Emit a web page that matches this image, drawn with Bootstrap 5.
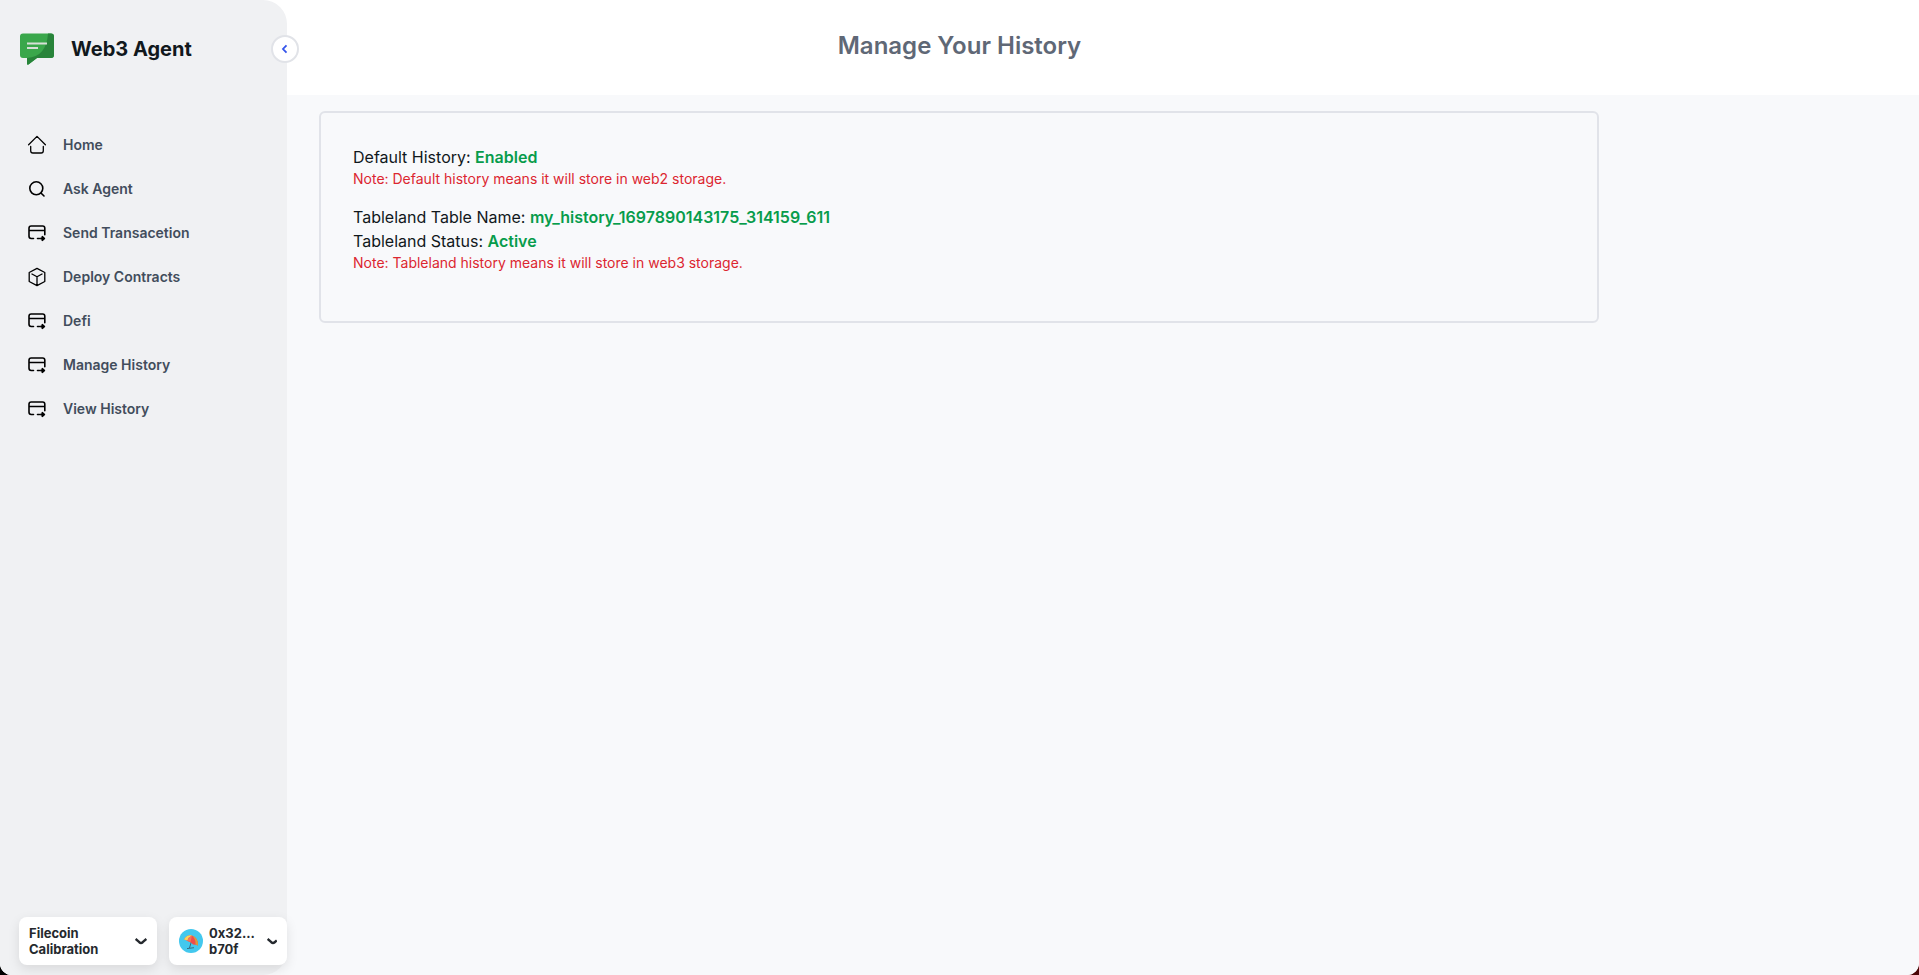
<!DOCTYPE html>
<html lang="en">
<head>
<meta charset="utf-8">
<meta name="viewport" content="width=device-width, initial-scale=1">
<title>Web3 Agent - Manage Your History</title>
<link rel="stylesheet" href="https://cdn.jsdelivr.net/npm/bootstrap@5.3.0/dist/css/bootstrap.min.css">
<style>
:root { --side-width: 287px; }
html { background: linear-gradient(90deg, #000 50%, #4a0606); }
body { font-family: Inter, "Liberation Sans", sans-serif; color: #11181c; background: transparent; }
.app-shell { background: #fff; border-radius: 0 0 12px 12px; overflow: hidden; }
.side-panel { width: var(--side-width); background: #f0f1f3; border-radius: 0 24px 24px 0; padding: 28px 0 10px; }
.content-area { background: #f8f9fb; }
.side-wrap { background: linear-gradient(#fff 95px, #f8f9fb 95px); }
.brand-row { height: 42px; padding-left: 19px; gap: 16px; }
.brand-name { font-size: 20px; line-height: 28px; font-weight: 700; color: #11181c; }
.toggle-btn { position: absolute; top: 35px; right: -12px; width: 28px; height: 28px; border: 2px solid #e1e3e8; z-index: 2; }
.side-nav { margin-top: 53px; padding: 0 16px; }
.side-link { height: 44px; padding: 0 11px; gap: 16px; font-size: 14px; line-height: 20px; font-weight: 600; color: #424d5c; }
.side-link svg { color: #000; }
.wallet-row { padding-left: 19px; gap: 12px; }
.wallet-btn { height: 48px; padding: 0 10px; border-radius: 8px; font-size: 13px; line-height: 16px; font-weight: 700; color: #25292e; box-shadow: 0 4px 12px rgba(0,0,0,.1); }
.network-btn { flex: 0 0 138px; }
.account-btn { flex: 1 1 0; }
.account-id { gap: 6px; }
.avatar { width: 24px; height: 24px; }
.page-head { padding: 30px var(--side-width) 33px 0; }
.page-title { font-size: 24px; line-height: 32px; font-weight: 600; color: #5f6876; }
.history-card { max-width: 1280px; border: 2px solid #e1e3e9; border-radius: 6px; padding: 32px; font-size: 16px; line-height: 24px; }
.state-text { color: #079c4b; font-weight: 600; }
.note-text { color: #dc2630; font-size: 14px; line-height: 20px; }
</style>
</head>
<body>
<svg class="d-none" aria-hidden="true">
  <symbol id="card-icon" viewBox="0 0 20 20" fill="none" stroke="currentColor" stroke-width="1.6" stroke-linecap="round" stroke-linejoin="round">
    <path d="M6.500 15.500H4.200Q2 15.500 2 13.300V5.200Q2 3 4.200 3H15.600Q17.800 3 17.800 5.200V11.800M2 7.500H17.800M10.500 15.500H12.500"/>
    <path d="M14 15.500H17.200M15.400 13.900L17 15.500L15.400 17.100" stroke-width="2"/>
  </symbol>
</svg>
<div class="app-shell d-flex min-vh-100">
  <div class="side-wrap d-flex flex-shrink-0">
    <aside class="side-panel position-relative d-flex flex-column">
      <div class="brand-row d-flex align-items-center">
        <svg width="36" height="36" viewBox="0 0 36 36" aria-hidden="true">
          <path d="M4 2.500H32Q35 2.500 35 5.500V24Q35 27 32 27H18L9.500 33.500H8V27H4Q1 27 1 24V5.500Q1 2.500 4 2.500Z" fill="#3aa74b"/>
          <path d="M29 2.500H32Q35 2.500 35 5.500V24Q35 27 32 27H18L9.500 33.500H8V27C21 26 28 18 29 2.500Z" fill="#28843a"/>
          <path d="M8 12.500H28M8 17H19" stroke="#d7dfd8" stroke-width="2"/>
        </svg>
        <span class="brand-name">Web3 Agent</span>
      </div>
      <button type="button" class="toggle-btn bg-white rounded-circle p-0 d-flex align-items-center justify-content-center" aria-label="Collapse sidebar">
        <svg width="12" height="12" viewBox="0 0 12 12" fill="none" stroke="#3454eb" stroke-width="1.800"><path d="M7.500 2.300L4 6L7.500 9.700"/></svg>
      </button>
      <nav class="side-nav nav flex-column flex-nowrap">
        <a href="#" class="side-link d-flex align-items-center text-decoration-none">
          <svg width="20" height="20" viewBox="0 0 20 20" fill="none" stroke="currentColor" stroke-width="1.300" stroke-linecap="round" stroke-linejoin="round"><path d="M1.600 9.800L10 1.400L18.400 9.800M3.700 11.500V15.800Q3.700 18 5.900 18H14.100Q16.300 18 16.300 15.800V11.500"/></svg>
          Home</a>
        <a href="#" class="side-link d-flex align-items-center text-decoration-none">
          <svg width="20" height="20" viewBox="0 0 20 20" fill="none" stroke="currentColor" stroke-width="1.600" stroke-linecap="round"><circle cx="9.300" cy="9.300" r="6.500"/><path d="M14.200 14.200L17 17"/></svg>
          Ask Agent</a>
        <a href="#" class="side-link d-flex align-items-center text-decoration-none"><svg width="20" height="20"><use href="#card-icon"/></svg>Send Transacetion</a>
        <a href="#" class="side-link d-flex align-items-center text-decoration-none">
          <svg width="20" height="20" viewBox="0 0 20 20" fill="none" stroke="currentColor" stroke-width="1.300" stroke-linejoin="round"><path d="M10 1.400L17.800 5.500V14.500L10 18.600L2.200 14.500V5.500ZM4.500 6.800L10 9.800L15.500 6.800M10 9.800V18.600"/></svg>
          Deploy Contracts</a>
        <a href="#" class="side-link d-flex align-items-center text-decoration-none"><svg width="20" height="20"><use href="#card-icon"/></svg>Defi</a>
        <a href="#" class="side-link d-flex align-items-center text-decoration-none"><svg width="20" height="20"><use href="#card-icon"/></svg>Manage History</a>
        <a href="#" class="side-link d-flex align-items-center text-decoration-none"><svg width="20" height="20"><use href="#card-icon"/></svg>View History</a>
      </nav>
      <div class="wallet-row d-flex mt-auto">
        <button type="button" class="wallet-btn network-btn bg-white border-0 d-flex align-items-center justify-content-between text-start">
          <span>Filecoin<br>Calibration</span>
          <svg width="12" height="8" viewBox="0 0 12 8" fill="none" stroke="#25292e" stroke-width="2.400"><path d="M.6 2L4.300 5.200Q6 6.600 7.700 5.200L11.400 2"/></svg>
        </button>
        <button type="button" class="wallet-btn account-btn bg-white border-0 d-flex align-items-center justify-content-between text-start">
          <span class="account-id d-flex align-items-center">
            <svg class="avatar" viewBox="0 0 24 24" aria-hidden="true">
              <circle cx="12" cy="12" r="12" fill="#43c8ee"/>
              <path d="M12.500 12L10.500 19M8 19.600L15 18.700" stroke="#31566b" stroke-width=".8"/>
              <path d="M5 10.500Q8 5.500 13 6.500Q19.500 9 19 16.500Q16.500 15.500 14 15.500Q12 13 9.500 12.500Q7 11 5 10.500Z" fill="#f04b4c"/>
              <path d="M5 10.500Q8 5.500 13 6.500Q9.500 8 8.500 11.500Z" fill="#f7d45b"/>
              <path d="M13 6.500Q19.500 9 19 16.500L16.500 15.600Q17 10.500 13 6.500Z" fill="#d99b3e"/>
              <path d="M13 6.500Q9.500 8 8.500 11.500Q10.500 12.500 11.500 13.200Z" fill="#f5735b"/>
            </svg>
            <span>0x32...<br>b70f</span>
          </span>
          <svg width="10" height="8" viewBox="0 0 10 8" fill="none" stroke="#25292e" stroke-width="2.400"><path d="M.6 2L4.300 5.200Q6 6.600 7.700 5.200L9.800 3.400"/></svg>
        </button>
      </div>
    </aside>
  </div>
  <main class="content-area flex-grow-1">
    <header class="page-head bg-white text-center">
      <h1 class="page-title m-0">Manage Your History</h1>
    </header>
    <div class="px-3 pt-3">
      <section class="history-card mx-3">
        <p class="m-0">Default History: <span class="state-text">Enabled</span></p>
        <p class="note-text mb-3">Note: Default history means it will store in web2 storage.</p>
        <p class="m-0">Tableland Table Name: <span class="state-text">my_history_1697890143175_314159_611</span></p>
        <p class="m-0">Tableland Status: <span class="state-text">Active</span></p>
        <p class="note-text mb-3">Note: Tableland history means it will store in web3 storage.</p>
      </section>
    </div>
  </main>
</div>
<script src="https://cdn.jsdelivr.net/npm/bootstrap@5.3.0/dist/js/bootstrap.bundle.min.js"></script>
</body>
</html>
